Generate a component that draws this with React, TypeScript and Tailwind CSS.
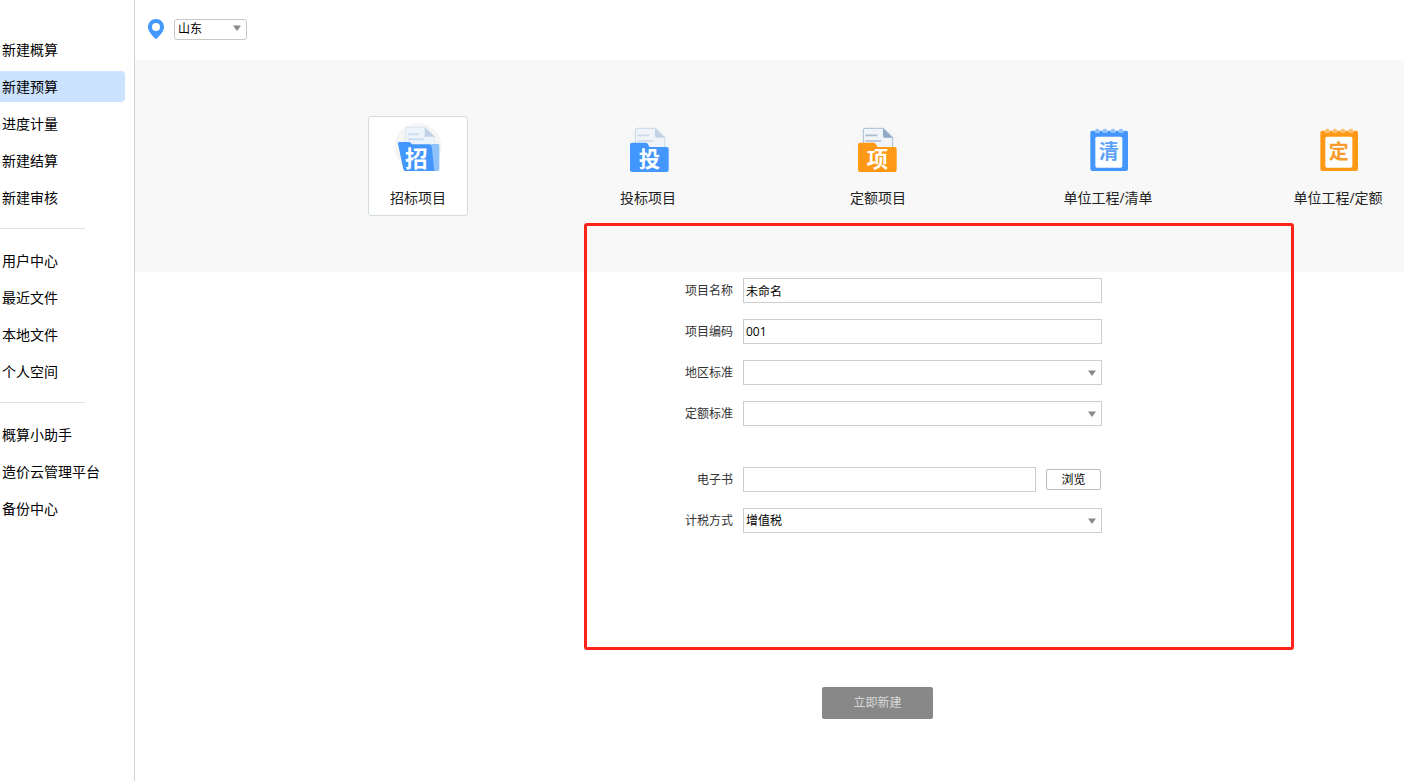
import React, { ReactNode, useState } from 'react'
import clsx from 'clsx'

const navGroups = [
  ['新建概算', '新建预算', '进度计量', '新建结算', '新建审核'],
  ['用户中心', '最近文件', '本地文件', '个人空间'],
  ['概算小助手', '造价云管理平台', '备份中心'],
]

// Glyph drawn on the front of an icon
function IconChar({ char, x, y, size, className }: { char: string; x: number; y: number; size: number; className: string }) {
  return (
    <text x={x} y={y} fontSize={size} textAnchor="middle" className={clsx('font-bold', className)}>
      {char}
    </text>
  )
}

// Tilted folder with a second page behind it
function OpenFolderIcon() {
  return (
    <svg viewBox="0 0 144 150" className="h-[50px] w-12 overflow-visible" aria-hidden="true">
      <circle cx="72" cy="75" r="71" fill="#f5f5f5" />
      <path d="M34 16H92L122 44V140H34Z" fill="#ecf3fb" stroke="#dbe6f2" strokeWidth="3" />
      <path d="M92 16L122 44H92Z" fill="#c0d2e6" />
      <path d="M42 37H74M42 52H90" stroke="#c9d9ee" strokeWidth="5" />
      <path d="M112 66H132Q136 66 136 70V142Q136 147 131 147H112Z" fill="#8fc2fb" />
      <path d="M16 60H44Q49 60 51 64L54 67H107Q112 67 113 72L121 147H34Q29 147 28 142L12 65Q11 60 16 60Z" fill="#4396fb" />
      <IconChar char="招" x={67} y={134} size={68} className="fill-white" />
    </svg>
  )
}

interface FolderProps {
  char: string
  color: string
  fold: string
  line: string
  offset: number
}

function FolderIcon({ char, color, fold, line, offset }: FolderProps) {
  return (
    <svg viewBox="0 0 144 150" className="h-[50px] w-12 overflow-visible" aria-hidden="true">
      <circle cx="70" cy="78" r="70" fill="#f5f6f7" />
      <g transform={`translate(${offset} 0)`}>
        <path d="M28 90V24Q28 19 33 19H89L116 46V90Z" fill="#f0f4f9" stroke={line} strokeWidth="3" />
        <path d="M87 19L116 47H92Q87 47 87 42Z" fill={fold} />
        <path d="M34 40H70M34 57H82" stroke={line} strokeWidth="5" />
        <path d="M18 62H60Q64 62 66 67L70 75H123Q128 75 128 80V144Q128 150 122 150H18Q12 150 12 144V68Q12 62 18 62Z" fill={color} />
        <IconChar char={char} x={70} y={135} size={64} className="fill-white" />
      </g>
    </svg>
  )
}

function NotepadIcon({ char, color, ring, textClass }: { char: string; color: string; ring: string; textClass: string }) {
  return (
    <svg viewBox="0 0 144 150" className="h-[50px] w-12 overflow-visible" aria-hidden="true">
      <rect x="19" y="26" width="113" height="121" rx="6" fill={color} />
      <rect x="34" y="44" width="81" height="93" rx="5" fill="#fdfeff" />
      {[40, 63, 87, 111].map((cx) => (
        <g key={cx}>
          <circle cx={cx} cy="25" r="8" fill="#f8f8f8" />
          <circle cx={cx} cy="27" r="7" fill={ring} />
        </g>
      ))}
      <IconChar char={char} x={74} y={111} size={60} className={textClass} />
    </svg>
  )
}

const projectTypes = [
  { label: '招标项目', icon: <OpenFolderIcon /> },
  { label: '投标项目', icon: <FolderIcon char="投" color="#4396fb" fold="#c3d3e6" line="#cbd9ea" offset={6} /> },
  { label: '定额项目', icon: <FolderIcon char="项" color="#ff9915" fold="#8fa8c4" line="#a9bdd3" offset={0} /> },
  { label: '单位工程/清单', icon: <NotepadIcon char="清" color="#4396fb" ring="#8fc1fc" textClass="fill-[#5ca2f8]" /> },
  { label: '单位工程/定额', icon: <NotepadIcon char="定" color="#ff9915" ring="#fdbd67" textClass="fill-[#f79c2c]" /> },
]

function Caret({ className }: { className: string }) {
  return (
    <svg viewBox="0 0 8 6" className={clsx('pointer-events-none absolute h-1.5 w-2', className)} aria-hidden="true">
      <path d="M0 0.5H8L4 6Z" fill="#8a8a8a" />
    </svg>
  )
}

function Field({ id, label, children }: { id: string; label: string; children: ReactNode }) {
  return (
    <div className="flex items-center gap-2.5">
      <label htmlFor={id} className="w-12 text-right whitespace-nowrap text-[#333]">
        {label}
      </label>
      {children}
    </div>
  )
}

const inputClass = 'h-[25px] border border-[#cdcdcd] bg-white px-0.5 text-black outline-none'

function SelectField({ id, label, options }: { id: string; label: string; options: string[] }) {
  return (
    <Field id={id} label={label}>
      <div className="relative w-[359px]">
        <select id={id} className={clsx(inputClass, 'block w-full appearance-none')}>
          {options.map((option) => (
            <option key={option}>{option}</option>
          ))}
        </select>
        <Caret className="top-2.5 right-1.5" />
      </div>
    </Field>
  )
}

export default function App() {
  const [activeNav, setActiveNav] = useState('新建预算')
  const [activeType, setActiveType] = useState('招标项目')

  return (
    <div className="flex min-h-screen bg-white font-['Open_Sans','Noto_Sans_CJK_SC',sans-serif] text-xs text-black">
      {/* Sidebar */}
      <nav className="w-[135px] shrink-0 border-r border-[#d2d2d2] pt-[34px] text-sm">
        {navGroups.map((group, i) => (
          <React.Fragment key={i}>
            {i > 0 && <hr className="mt-[15px] mb-4 w-[85px] border-[#e0e0e0]" />}
            <ul className="flex flex-col gap-1.5">
              {group.map((item) => (
                <li key={item}>
                  <a
                    href="#"
                    onClick={() => setActiveNav(item)}
                    className={clsx(
                      'mr-[9px] flex h-[31px] items-center rounded-r pl-0.5',
                      item === activeNav && 'bg-[#cce3ff]'
                    )}
                  >
                    {item}
                  </a>
                </li>
              ))}
            </ul>
          </React.Fragment>
        ))}
      </nav>

      <main className="min-w-0 flex-1 overflow-hidden">
        {/* Region */}
        <header className="flex h-[60px] items-center gap-2.5 pb-0.5 pl-[13px]">
          <svg viewBox="0 0 16 20" className="h-5 w-4" aria-hidden="true">
            <path
              d="M8 0C3.5 0 0 3.5 0 8C0 12.5 4.5 16.5 6.8 19.2Q8 20.4 9.2 19.2C11.5 16.5 16 12.5 16 8C16 3.5 12.5 0 8 0ZM8 4A4 4 0 1 1 8 12A4 4 0 1 1 8 4Z"
              fill="#4499ff"
              fillRule="evenodd"
            />
          </svg>
          <div className="relative">
            <select
              aria-label="地区"
              className="block h-[21px] w-[73px] appearance-none rounded-[3px] border border-[#c8c8c8] bg-white px-[3px] outline-none"
            >
              <option>山东</option>
            </select>
            <Caret className="top-1.5 right-1.5" />
          </div>
        </header>

        {/* Project type */}
        <section className="flex h-[212px] gap-[130px] bg-[#f8f8f8] pt-14 pl-[233px]">
          {projectTypes.map(({ label, icon }) => (
            <button
              key={label}
              type="button"
              aria-pressed={label === activeType}
              onClick={() => setActiveType(label)}
              className={clsx(
                'flex h-[100px] w-[100px] shrink-0 flex-col items-center gap-4 rounded-[3px] border pt-[5px] text-sm leading-5 whitespace-nowrap text-[#222]',
                label === activeType ? 'border-[#d3dde0] bg-white' : 'border-transparent'
              )}
            >
              {icon}
              {label}
            </button>
          ))}
        </section>

        {/* Project details */}
        <form className="relative pt-1.5 pl-[550px]" onSubmit={(e) => e.preventDefault()}>
          <div className="pointer-events-none absolute -top-[49px] left-[449px] h-[427px] w-[710px] rounded-[3px] border-3 border-[#ff2218]" />
          <div className="flex flex-col gap-4">
            <Field id="name" label="项目名称">
              <input id="name" defaultValue="未命名" className={clsx(inputClass, 'w-[359px]')} />
            </Field>
            <Field id="code" label="项目编码">
              <input id="code" defaultValue="001" className={clsx(inputClass, 'w-[359px]')} />
            </Field>
            <SelectField id="area" label="地区标准" options={['']} />
            <SelectField id="quota" label="定额标准" options={['']} />
          </div>
          <div className="mt-[41px] flex flex-col gap-4">
            <Field id="book" label="电子书">
              <input id="book" className={clsx(inputClass, 'w-[293px]')} />
              <button type="button" className="h-[21px] w-[55px] rounded-xs border border-[#bcbcbc] bg-white">
                浏览
              </button>
            </Field>
            <SelectField id="tax" label="计税方式" options={['增值税']} />
          </div>
          <button type="submit" className="mt-[154px] ml-[137px] block h-8 w-[111px] rounded-xs bg-[#888] text-[#d8d8d8]">
            立即新建
          </button>
        </form>
      </main>
    </div>
  )
}
